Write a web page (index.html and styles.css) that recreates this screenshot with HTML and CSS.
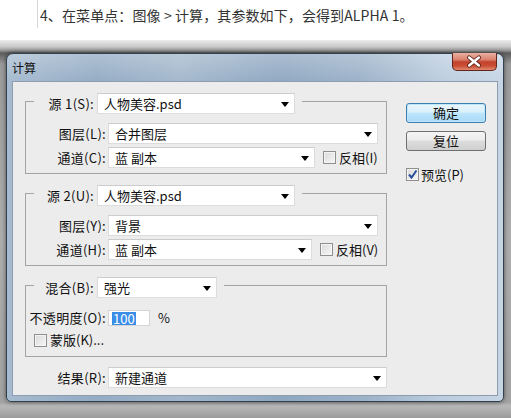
FILE: index.html
```html
<!DOCTYPE html>
<html lang="zh-CN">
<head>
<meta charset="utf-8">
<title>计算</title>
<link rel="stylesheet" href="styles.css">
</head>
<body>
<div class="caption"><p>4、在菜单点：图像 &gt; 计算，其参数如下，会得到ALPHA 1。</p></div>
<div class="desk">
  <div class="window">
    <div class="titlebar">
      <span class="title">计算</span>
      <span class="close"><svg width="45" height="18" viewBox="0 0 45 18"><path d="M17.5 4.5 L27.5 12.5 M27.5 4.5 L17.5 12.5" stroke="#5e2119" stroke-width="4.4" stroke-linecap="round" fill="none"/><path d="M17.5 4.5 L27.5 12.5 M27.5 4.5 L17.5 12.5" stroke="#fff" stroke-width="2.6" stroke-linecap="round" fill="none"/></svg></span>
    </div>
    <div class="client">
      <div class="main">
        <fieldset class="group">
          <legend class="legend"><span class="lbl lbl-leg">源 1(S):</span><span class="dd w-src">人物美容.psd</span></legend>
          <div class="row first"><span class="lbl">图层(L):</span><span class="dd w-wide">合并图层</span></div>
          <div class="row"><span class="lbl">通道(C):</span><span class="dd w-ch">蓝 副本</span><span class="check"></span><span class="ck-text">反相(I)</span></div>
        </fieldset>
        <fieldset class="group gap">
          <legend class="legend"><span class="lbl lbl-leg">源 2(U):</span><span class="dd w-src">人物美容.psd</span></legend>
          <div class="row first"><span class="lbl">图层(Y):</span><span class="dd w-wide">背景</span></div>
          <div class="row"><span class="lbl">通道(H):</span><span class="dd w-ch2">蓝 副本</span><span class="check"></span><span class="ck-text">反相(V)</span></div>
        </fieldset>
        <fieldset class="group gap blend">
          <legend class="legend"><span class="lbl lbl-leg">混合(B):</span><span class="dd w-blend">强光</span></legend>
          <div class="row first"><span class="lbl">不透明度(O):</span><span class="num"><span class="sel">100</span></span><span class="pct">%</span></div>
          <div class="row mask"><span class="check"></span><span class="ck-text">蒙版(K)...</span></div>
        </fieldset>
        <div class="row result"><span class="lbl">结果(R):</span><span class="dd w-res">新建通道</span></div>
      </div>
      <div class="side">
        <div class="btn btn-ok">确定</div>
        <div class="btn btn-reset">复位</div>
        <div class="preview"><span class="check checked"><svg width="11" height="11" viewBox="0 0 11 11"><path d="M2 5.5 L4.5 8.5 L9.5 1.5" stroke="#2a4d9b" stroke-width="2" fill="none"/></svg></span><span class="ck-text">预览(P)</span></div>
      </div>
    </div>
  </div>
</div>
</body>
</html>
```
FILE: styles.css
```css
* { box-sizing: border-box; }
html, body { margin: 0; padding: 0; }
body {
  width: 511px;
  height: 418px;
  overflow: hidden;
  background: #fff;
  font-family: "Noto Sans CJK SC", "Noto Sans", sans-serif;
  color: #000;
}
.caption { height: 40px; padding-left: 37px; }
.caption p {
  margin: 0;
  height: 28px;
  border-left: 1px solid #d6d6d6;
  padding-left: 2px;
  font-size: 14px;
  line-height: 30px;
  color: #333;
  white-space: nowrap;
  letter-spacing: 0.1px;
}
.desk {
  height: 378px;
  padding: 13px 0 0 6px;
  background: linear-gradient(to bottom, #ececec 0, #c6c6c6 7px, #8e8e8e 11px, #5c5c5c 13px, #9a9a9a 24px, #adadad 200px, #a2a2a2 362px, #b8b8b8 366px, #9a9a9a 378px);
}
.window {
  width: 498px;
  height: 349px;
  border: 1px solid #33414f;
  border-radius: 7px 7px 5px 5px;
  display: flex;
  flex-direction: column;
  background:
    linear-gradient(to bottom, rgba(255,255,255,0.25), rgba(255,255,255,0) 30px),
    linear-gradient(to right, #a6bbd0 0%, #93abc4 18%, #a2b7cc 35%, #8ea7c1 55%, #9cb2c9 72%, #bccddf 88%, #c6d5e4 100%);
  box-shadow: 0 0 4px rgba(0,0,0,0.55);
}
.titlebar {
  height: 27px;
  display: flex;
  align-items: flex-start;
  padding-left: 5px;
}
.title { font-size: 12px; line-height: 27px; color: #111; }
.close {
  margin-left: auto;
  margin-right: 6px;
  margin-top: -1px;
  width: 45px;
  height: 18px;
  border: 1px solid #5f241c;
  border-top: none;
  border-radius: 0 0 5px 5px;
  background: linear-gradient(to bottom, #eab0a3 0%, #d9806c 40%, #c2432d 52%, #c94c33 75%, #e08a6e 100%);
  display: flex;
  align-items: center;
  justify-content: center;
}
.close svg { display: block; margin-left: -1px; }
.client {
  flex: 1;
  margin: 0 5px 5px;
  background: #ececec;
  border: 1px solid #8d9cae;
  display: flex;
  align-items: flex-start;
  padding: 11px 11px 0 12px;
}
.main { width: 362px; display: flex; flex-direction: column; }
.group {
  margin: 0;
  padding: 0 7px 5px 0;
  border: 1px solid #a4a4a4;
  min-width: 0;
}
.group.gap { margin-top: 11px; }
.group.blend { padding-bottom: 8px; }
.legend {
  margin-left: 8px;
  padding: 0 7px 0 0;
  height: 17px;
  display: flex;
  align-items: flex-start;
}
.legend .dd { flex: none; }
.lbl {
  width: 80px;
  flex: none;
  text-align: right;
  margin-right: 2px;
  font-size: 13px;
  line-height: 21px;
  white-space: nowrap;
  letter-spacing: 0.3px;
  color: #111;
}
.lbl-leg { width: 60px; margin-right: 3px; }
.row {
  display: flex;
  align-items: center;
  height: 21px;
  margin-top: 3px;
}
.row.first { margin-top: 13px; }
.row.mask { height: 16px; margin-top: 4px; padding-left: 8px; }
.row.result { margin-top: 10px; }
.row.result .lbl { width: 81px; }
.dd {
  position: relative;
  display: block;
  height: 21px;
  background: #fff;
  border: 1px solid #dcdcdc;
  border-top-color: #cbcbcb;
  font-size: 13px;
  line-height: 19px;
  padding-left: 6px;
  white-space: nowrap;
  color: #111;
}
.dd::after {
  content: "";
  position: absolute;
  right: 5px;
  top: 8px;
  border-left: 4px solid transparent;
  border-right: 4px solid transparent;
  border-top: 5px solid #000;
}
.w-src { width: 198px; }
.w-wide { width: 270px; }
.w-ch { width: 207px; }
.w-ch2 { width: 204px; }
.w-blend { width: 120px; }
.w-res { width: 281px; }
.check {
  flex: none;
  width: 13px;
  height: 13px;
  border: 1px solid #8f8f8f;
  background: linear-gradient(135deg, #d9d9d9, #f7f7f7);
  box-shadow: inset 0 0 0 1px #f4f4f4;
  display: flex;
  align-items: center;
  justify-content: center;
}
.row .check { margin-left: 8px; }
.row.mask .check { margin-left: 0; }
.ck-text { font-size: 13px; line-height: 16px; margin-left: 3px; white-space: nowrap; color: #111; }
.num {
  display: block;
  width: 42px;
  height: 16px;
  background: #fff;
  border: 1px solid #d5d5d5;
  padding-left: 3px;
  padding-top: 1px;
}
.sel {
  display: inline-block;
  background: #3b8ee8;
  color: #fff;
  font-size: 13px;
  line-height: 13px;
  height: 13px;
  padding: 0 1px;
  vertical-align: top;
}
.pct { font-size: 13px; margin-left: 8px; color: #111; }
.side { margin-left: 19px; width: 80px; }
.btn {
  height: 20px;
  border-radius: 3px;
  font-size: 13px;
  line-height: 18px;
  text-align: center;
  color: #111;
}
.btn-ok {
  margin-top: 10px;
  border: 1px solid #3c7fb1;
  background: linear-gradient(to bottom, #eaf6fd 0%, #d9f0fc 45%, #bee6fd 50%, #a7d9f5 100%);
  box-shadow: inset 0 0 0 1px #bfe6fb;
}
.btn-reset {
  margin-top: 8px;
  border: 1px solid #707070;
  background: linear-gradient(to bottom, #f4f4f4 0%, #ececec 45%, #dddddd 50%, #cfcfcf 100%);
}
.preview { margin-top: 17px; display: flex; align-items: center; height: 13px; }
.preview .ck-text { margin-left: 2px; }
```
